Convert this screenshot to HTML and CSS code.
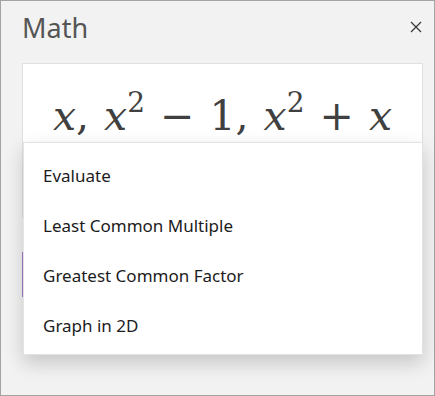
FILE: index.html
```
<!DOCTYPE html>
<html lang="en">
<head>
    <meta charset="UTF-8">
    <meta name="viewport" content="width=device-width, initial-scale=1.0">
    <title>Math</title>
    <link rel="stylesheet" href="styles.css">
</head>
<body>
    <div class="pane">
        <div class="pane-header">
            <h1 class="pane-title">Math</h1>
            <button class="close-btn" aria-label="Close">
                <svg width="12" height="12" viewBox="0 0 12 12">
                    <path d="M1 1 L11 11 M11 1 L1 11" stroke="#3a3a3a" stroke-width="1.3" fill="none"/>
                </svg>
            </button>
        </div>

        <div class="pane-body">
            <div class="equation-card">
                <div class="equation">
                    <i>x</i>, <i>x</i><sup>2</sup> − 1, <i>x</i><sup>2</sup> + <i>x</i>
                </div>
            </div>

            <div class="action-select"></div>

            <!-- dropdown opened over the card -->
            <ul class="action-menu">
                <li>Evaluate</li>
                <li>Least Common Multiple</li>
                <li>Greatest Common Factor</li>
                <li>Graph in 2D</li>
            </ul>
        </div>
    </div>
</body>
</html>
```

FILE: styles.css
```
html, body {
    margin: 0;
    padding: 0;
}
body {
    font-family: "Noto Sans", "Open Sans", sans-serif;
}
.pane {
    box-sizing: border-box;
    width: 435px;
    height: 396px;
    border: 1px solid #a3a3a3;
    background-color: #f2f2f2;
    padding: 0 11px 0 21px;
}
.pane-header {
    display: flex;
    align-items: center;
    justify-content: space-between;
    height: 62px;
}
.pane-title {
    margin: 0;
    margin-top: -10px;
    font-size: 27px;
    font-weight: normal;
    color: #555555;
}
.close-btn {
    background: none;
    border: none;
    padding: 0;
    margin-top: -10px;
    margin-right: 0;
    width: 14px;
    height: 14px;
    display: flex;
    align-items: center;
    justify-content: center;
}
.pane-body {
    position: relative;
}
.equation-card {
    background-color: #ffffff;
    border: 1px solid #e0e0e0;
    height: 153px;
}
.equation {
    font-family: "DejaVu Serif", serif;
    font-size: 41px;
    color: #404040;
    text-align: center;
    padding-top: 27px;
    line-height: 50px;
    white-space: nowrap;
    word-spacing: 2px;
}
.equation i {
    font-style: italic;
}
.equation sup {
    font-size: 28px;
    vertical-align: 18px;
    line-height: 0;
}
.action-select {
    margin-top: 34px;
    height: 45px;
    border-left: 2px solid #a07cc8;
    background-color: #f7f7f7;
}
.action-menu {
    position: absolute;
    top: 79px;
    left: 1px;
    width: 400px;
    height: 213px;
    box-sizing: border-box;
    margin: 0;
    padding: 8px 0 5px;
    list-style: none;
    background-color: #ffffff;
    border: 1px solid #e3e3e3;
    box-shadow: 0 8px 18px rgba(0, 0, 0, 0.18);
}
.action-menu li {
    height: 50px;
    line-height: 50px;
    padding-left: 19px;
    font-size: 17px;
    color: #1c1c1c;
}
```
